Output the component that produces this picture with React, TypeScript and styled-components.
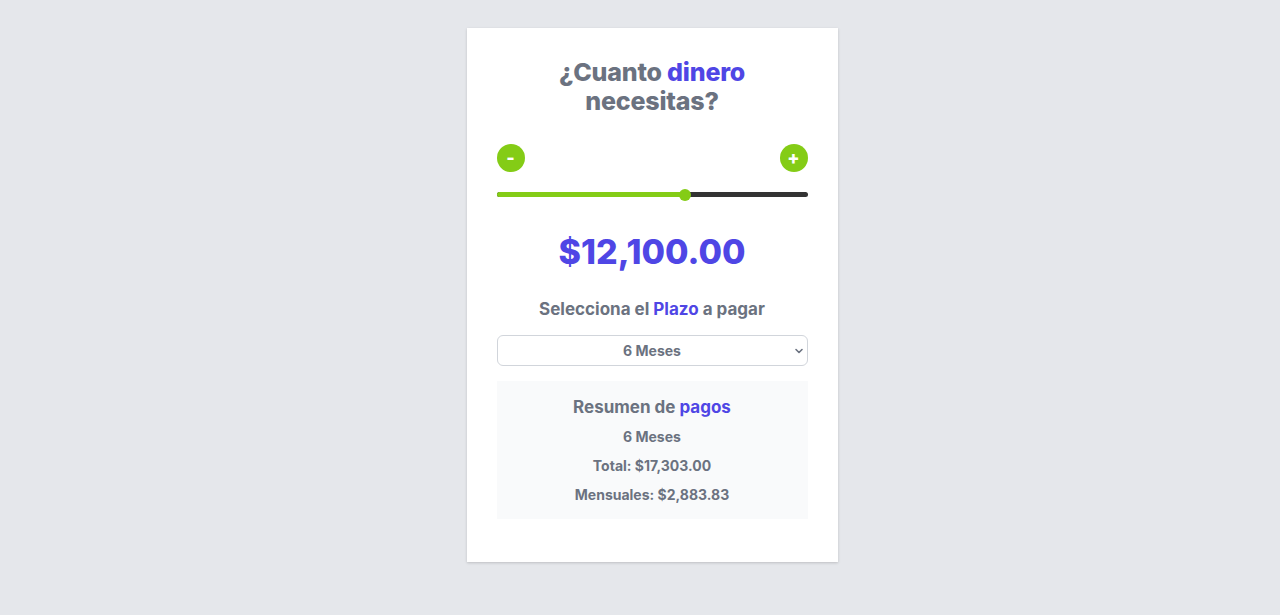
import { useState } from "react";
import styled, { createGlobalStyle } from "styled-components";

const GlobalStyle = createGlobalStyle`
  html, body {
    margin: 0;
    padding: 0;
    background: #e5e7eb;
    font-family: Inter, "Noto Sans", sans-serif;
    color: #6b7280;
  }
`;

const Page = styled.div`
  min-height: 615px;
  padding: 28px 0 0 24px;
  box-sizing: border-box;
`;

const Card = styled.div`
  width: 371px;
  margin: 0 auto;
  background: #fff;
  box-shadow: 0 1px 3px rgba(0, 0, 0, 0.12), 0 1px 2px rgba(0, 0, 0, 0.06);
  padding: 30px 30px 43px;
  box-sizing: border-box;
  display: flex;
  flex-direction: column;
`;

const Title = styled.h1`
  margin: 0;
  font-size: 25px;
  line-height: 29px;
  font-weight: 800;
  text-align: center;
  letter-spacing: -0.2px;
`;

const Accent = styled.span`
  color: #4f46e5;
`;

const ButtonRow = styled.div`
  display: flex;
  justify-content: space-between;
  margin-top: 28px;
`;

const RoundButton = styled.button`
  width: 28px;
  height: 28px;
  border-radius: 50%;
  border: none;
  padding: 0;
  background: #84cc16;
  color: #fff;
  font-family: inherit;
  font-size: 18px;
  font-weight: 800;
  line-height: 28px;
  cursor: pointer;
`;

const Track = styled.div`
  position: relative;
  height: 5px;
  margin-top: 20px;
  border-radius: 3px;
  background: #333333;
`;

const Fill = styled.div`
  height: 100%;
  border-radius: 3px;
  background: #84cc16;
`;

const Thumb = styled.div`
  position: absolute;
  top: 50%;
  width: 12px;
  height: 12px;
  margin: -6px 0 0 -6px;
  border-radius: 50%;
  background: #84cc16;
`;

const Amount = styled.div`
  margin-top: 35px;
  font-size: 34px;
  line-height: 40px;
  font-weight: 800;
  color: #4f46e5;
  text-align: center;
`;

const Subtitle = styled.h2`
  margin: 24px 0 0;
  font-size: 17px;
  line-height: 26px;
  font-weight: 700;
  text-align: center;
`;

const SelectWrap = styled.div`
  position: relative;
  margin-top: 13px;
`;

const Select = styled.select`
  appearance: none;
  width: 100%;
  height: 31px;
  border: 1px solid #d1d5db;
  border-radius: 6px;
  background: #fff;
  font-family: inherit;
  font-size: 14px;
  font-weight: 700;
  color: #6b7280;
  text-align: center;
  text-align-last: center;
`;

const Chevron = styled.svg`
  position: absolute;
  right: 4px;
  top: 11px;
  pointer-events: none;
`;

const Summary = styled.div`
  margin-top: 15px;
  background: #f9fafb;
  padding: 13px 0 12px;
  text-align: center;
`;

const SummaryTitle = styled.h3`
  margin: 0;
  font-size: 17px;
  line-height: 26px;
  font-weight: 700;
`;

const SummaryLine = styled.p`
  margin: 5px 0 0;
  font-size: 14px;
  line-height: 24px;
  font-weight: 700;
`;

const MIN = 0;
const MAX = 20000;

const money = (n: number) =>
  "$" + n.toLocaleString("en-US", { minimumFractionDigits: 2, maximumFractionDigits: 2 });

const App = () => {
  const [amount, setAmount] = useState(12100);
  const [months, setMonths] = useState(6);
  const pct = ((amount - MIN) / (MAX - MIN)) * 100;
  const total = 17303;

  return (
    <Page>
      <GlobalStyle />
      <Card>
        <Title>
          ¿Cuanto <Accent>dinero</Accent>
          <br />
          necesitas?
        </Title>
        <ButtonRow>
          <RoundButton onClick={() => setAmount(Math.max(MIN, amount - 100))}>-</RoundButton>
          <RoundButton onClick={() => setAmount(Math.min(MAX, amount + 100))}>+</RoundButton>
        </ButtonRow>
        <Track>
          <Fill style={{ width: `${pct}%` }} />
          <Thumb style={{ left: `${pct}%` }} />
        </Track>
        <Amount>{money(amount)}</Amount>
        <Subtitle>
          Selecciona el <Accent>Plazo</Accent> a pagar
        </Subtitle>
        <SelectWrap>
          <Select value={months} onChange={(e) => setMonths(Number(e.target.value))}>
            <option value={3}>3 Meses</option>
            <option value={6}>6 Meses</option>
            <option value={12}>12 Meses</option>
            <option value={24}>24 Meses</option>
          </Select>
          <Chevron width="10" height="10" viewBox="0 0 10 10">
            <path d="M2 3.5 L5 6.5 L8 3.5" fill="none" stroke="#6b7280" strokeWidth="1.6" strokeLinecap="round" strokeLinejoin="round" />
          </Chevron>
        </SelectWrap>
        <Summary>
          <SummaryTitle>
            Resumen de <Accent>pagos</Accent>
          </SummaryTitle>
          <SummaryLine>{months} Meses</SummaryLine>
          <SummaryLine>Total: {money(total)}</SummaryLine>
          <SummaryLine>Mensuales: {money(total / months)}</SummaryLine>
        </Summary>
      </Card>
    </Page>
  );
};

export default App;
